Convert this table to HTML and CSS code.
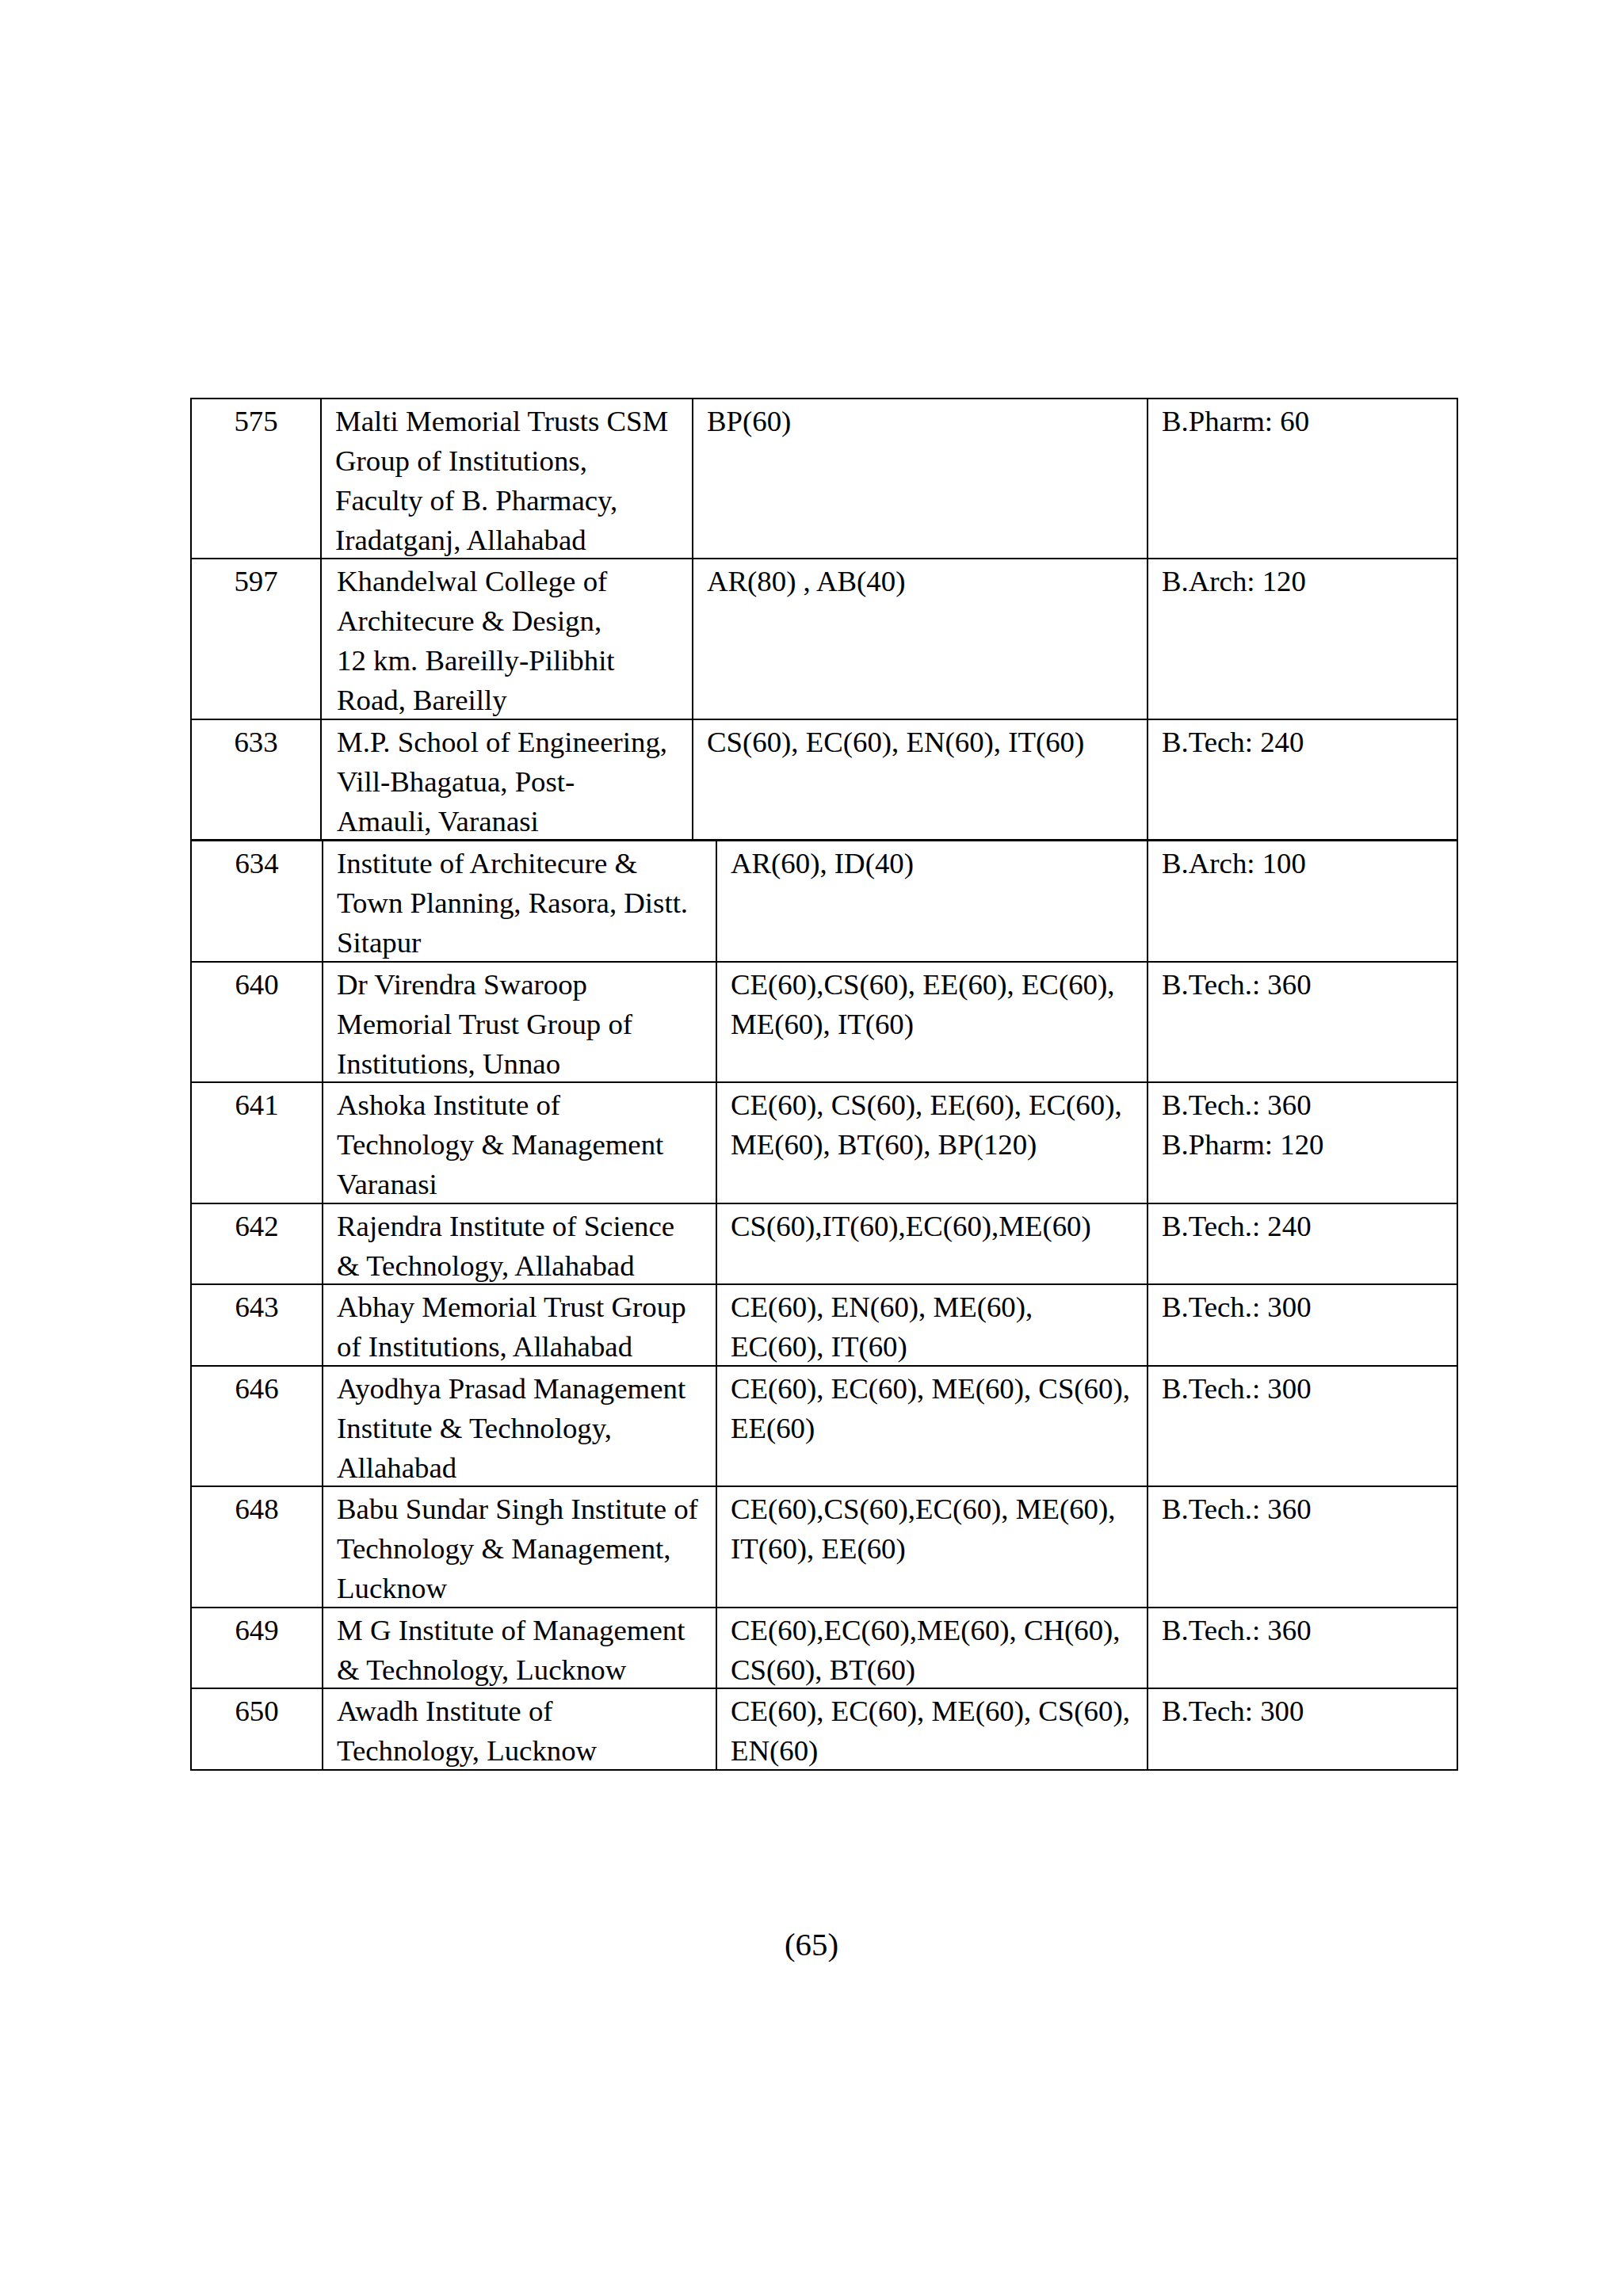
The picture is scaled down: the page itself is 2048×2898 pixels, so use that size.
FILE: index.html
```html
<!DOCTYPE html>
<html lang="en">
<head>
<meta charset="utf-8">
<title>Page 65</title>
<link rel="stylesheet" href="styles.css">
</head>
<body>
<main class="page">
  <table class="grid grid-a">
    <colgroup>
      <col class="c-no-a"><col class="c-name-a"><col class="c-br-a"><col class="c-in">
    </colgroup>
    <tbody>
      <tr>
        <td class="no"><p>575</p></td>
        <td><p>Malti Memorial Trusts CSM<br>Group of Institutions,<br>Faculty of B. Pharmacy,<br>Iradatganj, Allahabad</p></td>
        <td><p>BP(60)</p></td>
        <td><p>B.Pharm: 60</p></td>
      </tr>
      <tr>
        <td class="no"><p>597</p></td>
        <td><p class="shift">Khandelwal College of<br>Architecure &amp; Design,<br>12 km. Bareilly-Pilibhit<br>Road, Bareilly</p></td>
        <td><p>AR(80) , AB(40)</p></td>
        <td><p>B.Arch: 120</p></td>
      </tr>
      <tr>
        <td class="no"><p>633</p></td>
        <td><p class="shift">M.P. School of Engineering,<br>Vill-Bhagatua, Post-<br>Amauli, Varanasi</p></td>
        <td><p>CS(60), EC(60), EN(60), IT(60)</p></td>
        <td><p>B.Tech: 240</p></td>
      </tr>
    </tbody>
  </table>
  <table class="grid grid-b">
    <colgroup>
      <col class="c-no-b"><col class="c-name-b"><col class="c-br-b"><col class="c-in">
    </colgroup>
    <tbody>
      <tr>
        <td class="no"><p>634</p></td>
        <td><p>Institute of Architecure &amp;<br>Town Planning, Rasora, Distt.<br>Sitapur</p></td>
        <td><p>AR(60), ID(40)</p></td>
        <td><p>B.Arch: 100</p></td>
      </tr>
      <tr>
        <td class="no"><p>640</p></td>
        <td><p>Dr Virendra Swaroop<br>Memorial Trust Group of<br>Institutions, Unnao</p></td>
        <td><p>CE(60),CS(60), EE(60), EC(60),<br>ME(60), IT(60)</p></td>
        <td><p>B.Tech.: 360</p></td>
      </tr>
      <tr>
        <td class="no"><p>641</p></td>
        <td><p>Ashoka Institute of<br>Technology &amp; Management<br>Varanasi</p></td>
        <td><p>CE(60), CS(60), EE(60), EC(60),<br>ME(60), BT(60), BP(120)</p></td>
        <td><p>B.Tech.: 360<br>B.Pharm: 120</p></td>
      </tr>
      <tr>
        <td class="no"><p>642</p></td>
        <td><p>Rajendra Institute of Science<br>&amp; Technology, Allahabad</p></td>
        <td><p>CS(60),IT(60),EC(60),ME(60)</p></td>
        <td><p>B.Tech.: 240</p></td>
      </tr>
      <tr>
        <td class="no"><p>643</p></td>
        <td><p>Abhay Memorial Trust Group<br>of Institutions, Allahabad</p></td>
        <td><p>CE(60), EN(60), ME(60),<br>EC(60), IT(60)</p></td>
        <td><p>B.Tech.: 300</p></td>
      </tr>
      <tr>
        <td class="no"><p>646</p></td>
        <td><p>Ayodhya Prasad Management<br>Institute &amp; Technology,<br>Allahabad</p></td>
        <td><p>CE(60), EC(60), ME(60), CS(60),<br>EE(60)</p></td>
        <td><p>B.Tech.: 300</p></td>
      </tr>
      <tr>
        <td class="no"><p>648</p></td>
        <td><p>Babu Sundar Singh Institute of<br>Technology &amp; Management,<br>Lucknow</p></td>
        <td><p>CE(60),CS(60),EC(60), ME(60),<br>IT(60), EE(60)</p></td>
        <td><p>B.Tech.: 360</p></td>
      </tr>
      <tr>
        <td class="no"><p>649</p></td>
        <td><p>M G Institute of Management<br>&amp; Technology, Lucknow</p></td>
        <td><p>CE(60),EC(60),ME(60), CH(60),<br>CS(60), BT(60)</p></td>
        <td><p>B.Tech.: 360</p></td>
      </tr>
      <tr>
        <td class="no"><p>650</p></td>
        <td><p>Awadh Institute of<br>Technology, Lucknow</p></td>
        <td><p>CE(60), EC(60), ME(60), CS(60),<br>EN(60)</p></td>
        <td><p>B.Tech: 300</p></td>
      </tr>
    </tbody>
  </table>
  <footer class="folio">(65)</footer>
</main>
</body>
</html>
```
FILE: styles.css
```css
html, body {
  margin: 0;
  padding: 0;
  background: #ffffff;
}

body {
  font-family: "Liberation Serif", "Times New Roman", serif;
  color: #000000;
  width: 2048px;
  min-height: 2898px;
}

.page {
  padding-top: 501.5px;
  width: 2048px;
}

.grid {
  border-collapse: collapse;
  table-layout: fixed;
  width: 1600px;
  margin-left: 240px;
  font-size: 36.8px;
  line-height: 50px;
}

.grid-b {
  margin-top: -1px;
}

.grid td {
  border: 2px solid #000000;
  padding: 0 4px 0 17px;
  vertical-align: top;
  white-space: nowrap;
}

.grid td.no {
  text-align: center;
  padding: 0;
}

.grid p {
  margin: 0 0 -2.5px 0;
  padding-top: 3px;
}

.grid p.shift {
  padding-left: 2px;
}

.c-no-a { width: 164px; }
.c-name-a { width: 469px; }
.c-br-a { width: 574px; }
.c-no-b { width: 166px; }
.c-name-b { width: 497px; }
.c-br-b { width: 544px; }
.c-in { width: 391px; }

.folio {
  margin-top: 196px;
  text-align: center;
  font-size: 40.8px;
  line-height: 47px;
}
```
